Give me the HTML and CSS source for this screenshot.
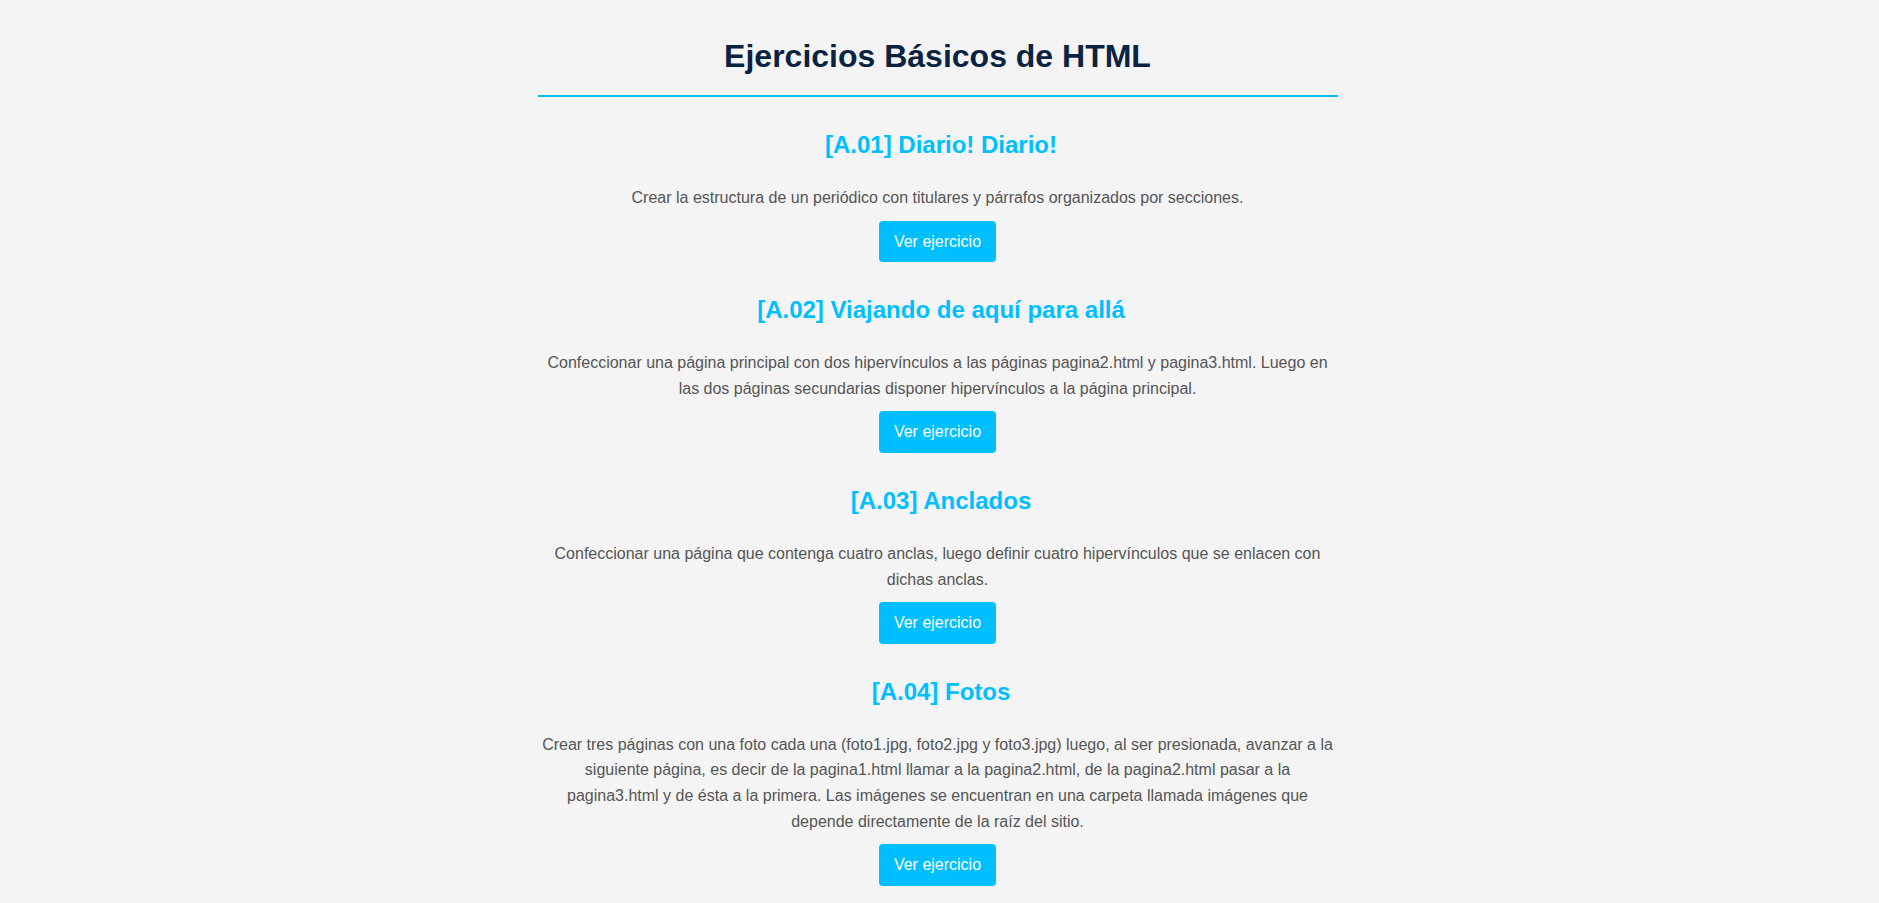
FILE: index.html
```html
<!DOCTYPE html>
<html lang="es">
<head>
<meta charset="utf-8">
<title>Ejercicios Básicos de HTML</title>
<link rel="stylesheet" href="styles.css">
</head>
<body>
<main class="container">
  <h1 class="page-title">Ejercicios Básicos de HTML</h1>

  <section class="exercise">
    <h2 class="exercise-title">[A.01] Diario! Diario!</h2>
    <p class="exercise-text">Crear la estructura de un periódico con titulares y párrafos organizados por secciones.</p>
    <a class="btn" href="#">Ver ejercicio</a>
  </section>

  <section class="exercise">
    <h2 class="exercise-title">[A.02] Viajando de aquí para allá</h2>
    <p class="exercise-text">Confeccionar una página principal con dos hipervínculos a las páginas pagina2.html y pagina3.html. Luego en las dos páginas secundarias disponer hipervínculos a la página principal.</p>
    <a class="btn" href="#">Ver ejercicio</a>
  </section>

  <section class="exercise">
    <h2 class="exercise-title">[A.03] Anclados</h2>
    <p class="exercise-text">Confeccionar una página que contenga cuatro anclas, luego definir cuatro hipervínculos que se enlacen con dichas anclas.</p>
    <a class="btn" href="#">Ver ejercicio</a>
  </section>

  <section class="exercise">
    <h2 class="exercise-title">[A.04] Fotos</h2>
    <p class="exercise-text">Crear tres páginas con una foto cada una (foto1.jpg, foto2.jpg y foto3.jpg) luego, al ser presionada, avanzar a la siguiente página, es decir de la pagina1.html llamar a la pagina2.html, de la pagina2.html pasar a la pagina3.html y de ésta a la primera. Las imágenes se encuentran en una carpeta llamada imágenes que depende directamente de la raíz del sitio.</p>
    <a class="btn" href="#">Ver ejercicio</a>
  </section>
</main>
</body>
</html>
```

FILE: styles.css
```css
* {
  box-sizing: border-box;
}

html, body {
  margin: 0;
  padding: 0;
  background: #f4f4f4;
}

body {
  font-family: "Liberation Sans", Arial, sans-serif;
  font-size: 16px;
  line-height: 1.6;
  color: #555555;
}

.container {
  width: 800px;
  margin: 0 auto;
  padding: 38px 0 12px;
  display: flex;
  flex-direction: column;
  transform: translateX(-2px);
}

.page-title {
  margin: 0;
  padding-bottom: 20px;
  border-bottom: 2px solid #00bfff;
  font-size: 32px;
  font-weight: bold;
  line-height: normal;
  color: #0a2342;
  text-align: center;
}

.exercise {
  display: flex;
  flex-direction: column;
  align-items: center;
  margin-top: 34px;
  text-align: center;
}

.exercise-title {
  margin: 0 0 26px;
  padding-left: 7px;
  font-size: 24px;
  font-weight: bold;
  line-height: normal;
  color: #00bfff;
}

.exercise-text {
  margin: 0 0 10px;
  color: #555555;
}

.btn {
  display: inline-block;
  padding: 8px 15px;
  background: #00bfff;
  color: #ffffff;
  text-decoration: none;
  border-radius: 4px;
  font-size: 16px;
  line-height: 1.6;
}
```
